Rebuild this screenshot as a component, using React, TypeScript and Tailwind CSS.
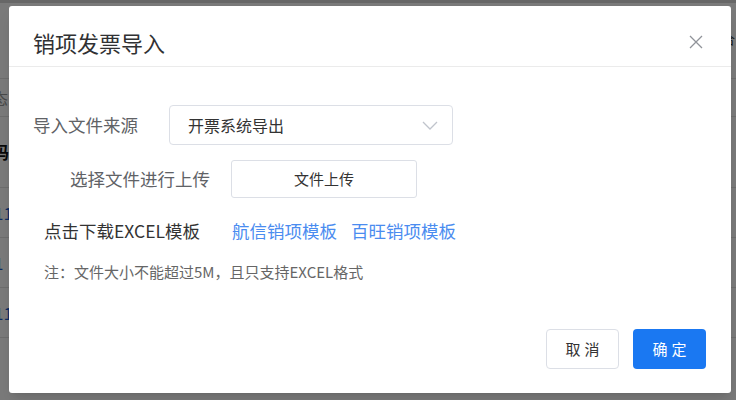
import React from "react";

const font = "font-['Noto_Sans_CJK_SC','Noto_Sans',sans-serif]";

const CloseIcon = () => (
  <svg width="14" height="14" viewBox="0 0 14 14" fill="none">
    <path d="M1 1L13 13M13 1L1 13" stroke="#909399" strokeWidth="1.3" />
  </svg>
);

const Chevron = () => (
  <svg width="16" height="9" viewBox="0 0 16 9" fill="none">
    <path d="M1 1L8 8L15 1" stroke="#c0c4cc" strokeWidth="1.3" />
  </svg>
);

const BackgroundPage = () => {
  const rows = ["11", "1", "11"];
  return (
    <div className="flex flex-col">
      <div className="h-[3px] bg-[#d8d8d8]" />
      <div className="h-[76px] border-b border-[#e4e4e4] flex justify-end pt-[26px] pr-[1px]">
        <span className="text-[13px] text-[#333]">合</span>
      </div>
      <div className="h-[38px] border-b border-[#e4e4e4] flex items-center">
        <span className="-ml-[8px] text-[16px] text-[#999]">态</span>
      </div>
      <div className="h-[71px] border-b border-[#e4e4e4] flex items-center">
        <span className="-ml-[8px] text-[17px] font-bold text-[#111]">码</span>
      </div>
      {rows.map((r, i) => (
        <div
          key={i}
          className="h-[50px] border-b border-[#e4e4e4] flex items-center"
        >
          <span className="-ml-[6px] text-[17px] text-[#1e5fd0]">{r}</span>
        </div>
      ))}
    </div>
  );
};

export default function App() {
  return (
    <div className={`relative w-[736px] h-[400px] overflow-hidden bg-white ${font}`}>
      <BackgroundPage />
      <div className="absolute inset-0 bg-black/[0.52]" />

      <div className="absolute left-[9px] top-[6px] w-[722px] h-[387px] bg-white rounded-[3px] shadow-lg flex flex-col">
        {/* header */}
        <div className="h-[61px] pt-[12px] pl-[24px] pr-[28px] flex items-center justify-between border-b border-[#ebebeb]">
          <span className="text-[22px] text-[#303133] leading-none">销项发票导入</span>
          <CloseIcon />
        </div>

        {/* body */}
        <div className="flex-1 flex flex-col">
          <div className="mt-[38px] pl-[24px] flex items-center h-[40px]">
            <span className="w-[136px] text-[17.5px] text-[#606266]">导入文件来源</span>
            <div className="w-[284px] h-[40px] rounded-[4px] border border-[#dcdfe6] flex items-center justify-between pl-[18px] pr-[14px]">
              <span className="text-[16px] text-[#333]">开票系统导出</span>
              <Chevron />
            </div>
          </div>

          <div className="mt-[15px] pl-[61px] flex items-center h-[38px]">
            <span className="w-[161px] text-[17.5px] text-[#606266]">选择文件进行上传</span>
            <div className="w-[186px] h-[38px] rounded-[3px] border border-[#dcdfe6] flex items-center justify-center">
              <span className="text-[15px] text-[#333]">文件上传</span>
            </div>
          </div>

          <div className="mt-[21px] pl-[35px] flex items-center h-[24px]">
            <span className="w-[188px] text-[17.5px] text-[#333]">点击下载EXCEL模板</span>
            <span className="text-[17.5px] text-[#4a8cf0]">航信销项模板</span>
            <span className="ml-[14px] text-[17.5px] text-[#4a8cf0]">百旺销项模板</span>
          </div>

          <div className="mt-[19px] pl-[35px] h-[20px] flex items-center">
            <span className="text-[15px] text-[#666]">注：文件大小不能超过5M，且只支持EXCEL格式</span>
          </div>
        </div>

        {/* footer */}
        <div className="flex justify-end gap-[14px] pr-[25px] pb-[24px]">
          <button className="w-[73px] h-[40px] rounded-[4px] border border-[#dcdfe6] bg-white text-[15px] text-[#333] tracking-[4px] pl-[4px]">
            取消
          </button>
          <button className="w-[73px] h-[40px] rounded-[4px] bg-[#1a78f2] text-[15px] text-white tracking-[4px] pl-[4px]">
            确定
          </button>
        </div>
      </div>
    </div>
  );
}
